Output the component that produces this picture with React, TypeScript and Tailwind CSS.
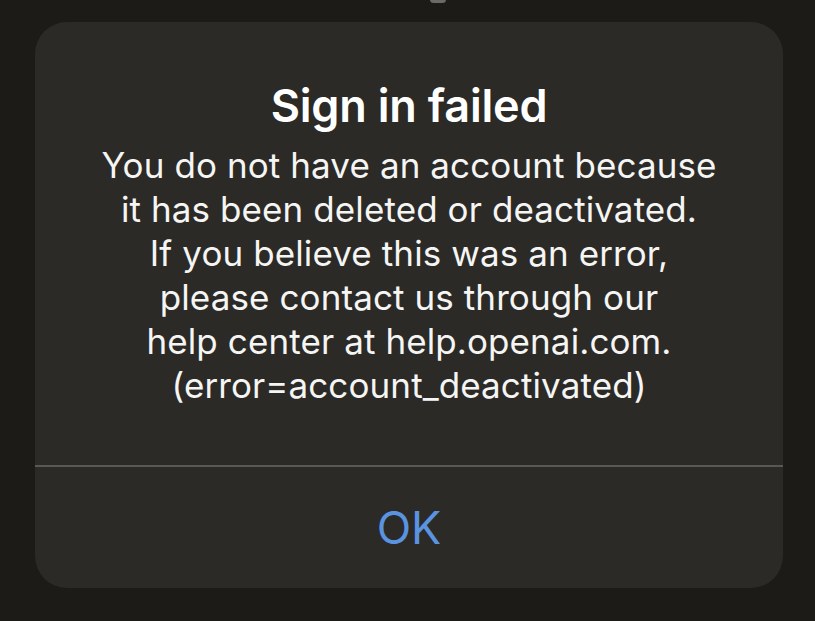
export default function App() {
  return (
    <div className="w-[815px] h-[621px] bg-[#1c1b17] relative overflow-hidden font-['Inter','Liberation_Sans',sans-serif]">
      {/* bit of something peeking at the top edge */}
      <div className="absolute left-[430px] -top-[4px] w-[16px] h-[7px] rounded-full bg-[#6b6a66]" />

      <div className="pt-[22px] px-[35px]">
        <div className="w-[748px] h-[566px] bg-[#2b2a27] rounded-[32px] flex flex-col overflow-hidden">
          {/* message */}
          <div className="h-[443px] flex flex-col items-center pt-[57px] text-white text-center">
            <h1 className="text-[45px] leading-[54px] font-semibold tracking-[-0.2px]">Sign in failed</h1>
            <p className="mt-[10px] text-[35px] leading-[44px] text-[#f5f5f3] tracking-[0.1px]">
              You do not have an account because
              <br />
              it has been deleted or deactivated.
              <br />
              If you believe this was an error,
              <br />
              please contact us through our
              <br />
              help center at help.openai.com.
              <br />
              (error=account_deactivated)
            </p>
          </div>

          <div className="h-[2px] bg-[#585855]" />

          {/* action */}
          <button className="flex-1 flex items-start justify-center pt-[36px] text-[45px] leading-[50px] text-[#5a93e0]">
            OK
          </button>
        </div>
      </div>
    </div>
  );
}
